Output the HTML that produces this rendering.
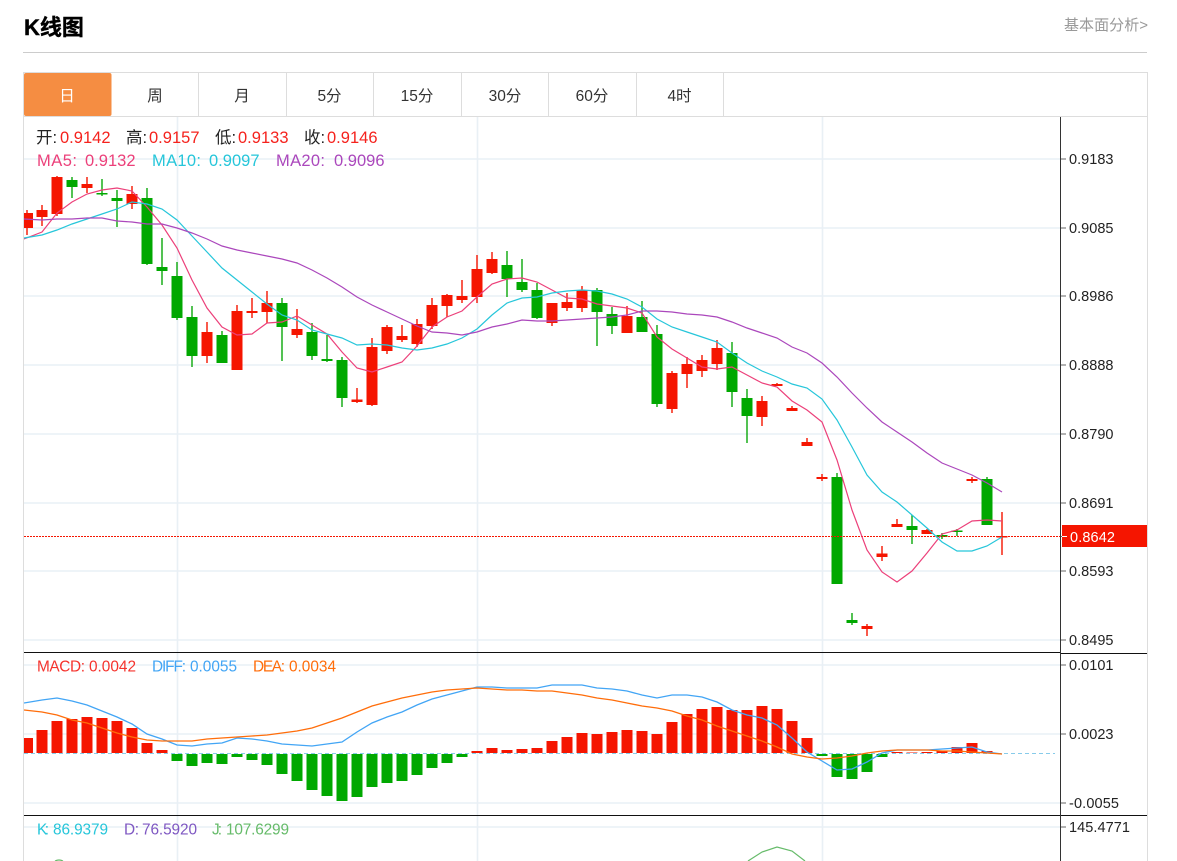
<!DOCTYPE html>
<html lang="zh"><head><meta charset="utf-8"><title>K线图</title>
<style>
html,body{margin:0;padding:0;background:#fff;width:1177px;height:861px;overflow:hidden}
svg{display:block}
text{font-family:"Liberation Sans","Noto Sans CJK SC",sans-serif}
.ax{font-size:14.5px;fill:#222}
.tab{font-size:15.5px;fill:#333;text-anchor:middle}
.l1{font-size:16.5px}.l2{font-size:15.4px}
</style></head><body>
<svg width="1177" height="861" viewBox="0 0 1177 861" xmlns="http://www.w3.org/2000/svg" fill="none">
<defs><clipPath id="c"><rect x="24" y="117" width="1037" height="744"/></clipPath></defs>
<text x="24" y="35" font-size="22" font-weight="bold" fill="#000" stroke="#000" stroke-width="0.4">K线图</text>
<text x="1064" y="30" font-size="15" fill="#999" textLength="84">基本面分析&gt;</text>
<path d="M23 52.5H1147" stroke="#ccc"/>
<path d="M23 72.5H1147.5V861M23.5 72V861M23 116.5H1147" stroke="#ddd"/>
<rect x="24" y="73" width="87.5" height="43" rx="2" fill="#f58d42"/>
<path d="M198.5 73V116M286.5 73V116M373.5 73V116M461.5 73V116M548.5 73V116M636.5 73V116M723.5 73V116" stroke="#ddd"/>
<text class="tab" x="67" y="101" style="fill:#fff">日</text>
<text class="tab" x="155" y="101">周</text>
<text class="tab" x="242" y="101">月</text>
<text class="tab" x="329.500" y="101">5分</text>
<text class="tab" x="417" y="101">15分</text>
<text class="tab" x="505" y="101">30分</text>
<text class="tab" x="592" y="101">60分</text>
<text class="tab" x="679.500" y="101">4时</text>

<!-- grid -->
<path d="M24 159H1061M24 228H1061M24 296H1061M24 365H1061M24 434H1061M24 503H1061M24 571H1061M24 640H1061M24 665H1061M24 734H1061M24 803H1061M24 827H1061M177.500 117V861M477.500 117V861M822.500 117V861" stroke="#e9f0f5" stroke-width="1.6"/>
<path d="M1061 159h5M1061 228h5M1061 296h5M1061 365h5M1061 434h5M1061 503h5M1061 571h5M1061 640h5M1061 536.500h5M1061 665h5M1061 734h5M1061 803h5M1061 827h5" stroke="#666"/>

<g clip-path="url(#c)">
<!-- red wicks -->
<path stroke="#f51500" stroke-width="1.4" d="M27 210V235M42 205V226M57 176V216M87 177V193M132 186V209M207 322V363M237 305V370M252 298V318M267 291V323M297 309V338M357 388V403M372 338V406M387 325V354M402 325V342M417 319V347M432 298V329M447 294V317M462 280V303M477 255V303M492 252V274M552 303V326M567 293V311M582 286V312M627 306V333M672 371V413M687 357V388M702 355V377M717 340V370M762 396V426M777 383V386M792 406V411M807 438V446M822 474V481M867 624V636M882 546V561M897 519V527M927 529V534M972 477V483M1002 512V555"/>
<!-- green wicks -->
<path stroke="#0aa80a" stroke-width="1.4" d="M72 177V198M102 179V196M117 190V227M147 188V265M162 238V285M177 262V320M192 306V367M222 331V363M282 298V361M312 323V360M327 335V362M342 357V407M507 251V297M522 259V292M537 283V319M597 288V346M612 307V334M642 301V332M657 325V407M732 342V407M747 389V443M837 473V584M852 613V625M912 515V544M942 533V539M957 529V536M987 477V525"/>
<!-- red bodies -->
<path stroke="#f51500" stroke-width="11" d="M27.500 213V228M42 210V217M57 177V214M87 184V188M132 194V204M207 332V356M237 311V370M252 311V313M267 303V312M297 329V335M357 399.500V402M372 347V405M387 327V351M402 336V340M417 324V344M432 305V326M447 295V306M462 296V300M477 269V297M492 259V273M552 303V323M567 302V308M582 290V308M627 316V333M672 373V409M687 364V374M702 360V371M717 348V364M762 401V417M777 384V386M792 408V411M807 442V446M822 477V479M867 626V629M882 553.500V557M897 524V527M927 530V534M972 479V481M1002 536V537.500"/>
<!-- green bodies -->
<path stroke="#00a800" stroke-width="11" d="M72 180V187M102 193V194.500M117 198V201M147 198V264M162 267V271M177 276V318M192 317V356M222 335V363M282 303V327M312 332V356M327 359V361M342 360V398M507 265V279M522 282V290M537 290V318M597 290V312M612 314V326M642 317V332M657 334V404M732 353V392M747 398V416M837 477V584M852 620V623M912 526V530M942 535V537M957 530.500V532M987 479V525"/>

<path d="M24 536.500H1061" stroke="#f51500" stroke-width="1" stroke-dasharray="2 1"/>

<polyline stroke="#ec407a" stroke-width="1.2" points="24,239 42,232 57,213 72,202 87,194 102,190 117,188 132,191 147,207 162,225 177,248 192,280 207,308 222,327 237,335 252,334 267,323 282,322 297,316 312,325 327,334 342,352 357,368 372,372 387,367 402,362 417,346 432,327 447,317 462,311 477,297 492,284 507,279 522,278 537,282 552,290 567,298 582,299 597,304 612,306 627,308 642,313 657,337 672,349 687,358 702,367 717,369 732,367 747,375 762,383 777,387 792,401 807,410 822,422 837,460 852,510 867,550 882,572 897,582 912,571 927,553 942,534 957,530 972,521 987,520 1002,521"/>
<polyline stroke="#26c6da" stroke-width="1.2" points="24,238 42,235 57,230 72,224 87,219 102,214 117,209 132,202 147,204 162,209 177,220 192,236 207,252 222,268 237,280 252,292 267,304 282,315 297,320 312,330 327,334 342,338 357,345 372,344 387,345 402,348 417,350 432,348 447,344 462,338 477,329 492,315 507,303 522,298 537,297 552,293 567,291 582,290 597,291 612,294 627,299 642,307 657,319 672,327 687,332 702,337 717,342 732,353 747,363 762,371 777,377 792,384 807,388 822,399 837,420 852,447 867,475 882,492 897,502 912,515 927,528 942,542 957,551 972,551 987,546 1002,537"/>
<polyline stroke="#ab47bc" stroke-width="1.2" points="24,219 42,220 57,219 72,219 87,218 102,218 117,221 132,222 147,224 162,224 177,228 192,233 207,239 222,246 237,250 252,253 267,256 282,259 297,263 312,270 327,278 342,287 357,297 372,305 387,312 402,319 417,326 432,332 447,333 462,335 477,332 492,327 507,324 522,320 537,321 552,321 567,320 582,319 597,318 612,317 627,315 642,311 657,311 672,312 687,314 702,315 717,317 732,322 747,328 762,333 777,338 792,347 807,353 822,363 837,377 852,393 867,408 882,422 897,432 912,442 927,453 942,463 957,469 972,475 987,483 1002,492"/>

<!-- MACD -->
<path d="M24 753.500H1055" stroke="#87cbea" stroke-dasharray="4 3"/>
<path stroke="#f51500" stroke-width="11" d="M27.500 753V738M42 753V730M57 753V721M72 753V719M87 753V717M102 753V718M117 753V721M132 753V728M147 753V743M162 753V750M477 753V751M492 753V748M507 753V750M522 753V749M537 753V748M552 753V741M567 753V737M582 753V733M597 753V734M612 753V732M627 753V730M642 753V731M657 753V734M672 753V722M687 753V714M702 753V709M717 753V707M732 753V710M747 753V710M762 753V706M777 753V709M792 753V721M807 753V738M897 753V752M912 753V752.500M927 753V752M942 753V751M957 753V747M972 753V743M987 753V751"/>
<path stroke="#00a800" stroke-width="11" d="M177 754V761M192 754V766M207 754V763M222 754V764M237 754V757M252 754V760M267 754V765M282 754V774M297 754V781M312 754V790M327 754V796M342 754V801M357 754V797M372 754V787M387 754V783M402 754V781M417 754V775M432 754V768M447 754V763M462 754V757M822 754V756M837 754V777M852 754V779M867 754V772M882 754V757"/>
<polyline stroke="#42a5f5" stroke-width="1.3" points="24,703 42,700 57,698 72,701 87,705 102,711 117,717 132,724 147,734 162,739 177,745 192,746 207,744 222,743 237,738 252,739 267,741 282,744 297,745 312,746 327,744 342,742 357,732 372,723 387,717 402,712 417,705 432,699 447,695 462,691 477,687 492,687 507,688 522,688 537,688 552,685 567,685 582,685 597,688 612,689 627,691 642,695 657,698 672,695 687,695 702,697 717,702 732,710 747,715 762,718 777,725 792,738 807,752 822,761 837,770 852,769 867,762 882,753 897,750 912,750 927,750 942,749 957,748 972,747 987,752 1002,754"/>
<polyline stroke="#ff6d0a" stroke-width="1.3" points="24,710 42,712 57,715 72,720 87,723 102,728 117,733 132,737 147,740 162,741 177,741 192,741 207,739 222,738 237,737 252,736 267,735 282,733 297,731 312,728 327,723 342,718 357,712 372,706 387,702 402,698 417,695 432,692 447,690 462,689 477,688 492,689 507,690 522,690 537,691 552,691 567,693 582,695 597,698 612,700 627,703 642,706 657,708 672,711 687,716 702,720 717,726 732,731 747,736 762,741 777,747 792,754 807,757 822,759 837,758 852,756 867,753 882,751 897,750 912,750 927,750 942,751 957,751 972,752 987,753 1002,754"/>
<!-- J -->
<polyline stroke="#66bb6a" stroke-width="1.2" points="748,861 762,852 777,847 792,851 805,861"/>
<path d="M55 861Q59 859 63 861" stroke="#66bb6a" stroke-width="1.2"/>
</g>

<path d="M24 652.500H1061M1061 653.500H1147M24 815.500H1147" stroke="#111"/>
<path d="M1060.500 117V861" stroke="#333"/>

<rect x="1062" y="525" width="85" height="22" fill="#f51500"/>
<path d="M1062 536.500h5" stroke="#fff"/>
<text x="1070" y="542" font-size="14.5" fill="#fff" textLength="45">0.8642</text>

<g class="ax">
<text class="ax" x="1069" y="164" textLength="44.500">0.9183</text>
<text class="ax" x="1069" y="233" textLength="44.500">0.9085</text>
<text class="ax" x="1069" y="301" textLength="44.500">0.8986</text>
<text class="ax" x="1069" y="370" textLength="44.500">0.8888</text>
<text class="ax" x="1069" y="439" textLength="44.500">0.8790</text>
<text class="ax" x="1069" y="508" textLength="44.500">0.8691</text>
<text class="ax" x="1069" y="576" textLength="44.500">0.8593</text>
<text class="ax" x="1069" y="645" textLength="44.500">0.8495</text>
<text class="ax" x="1069" y="670" textLength="44.500">0.0101</text>
<text class="ax" x="1069" y="739" textLength="44.500">0.0023</text>
<text class="ax" x="1069" y="808" textLength="50">-0.0055</text>
<text class="ax" x="1069" y="832" textLength="61">145.4771</text>
</g>

<!-- legends -->
<g class="l1" fill="#222">
<text class="l1" x="36" y="143" fill="#222">开:</text>
<text class="l1" x="60" y="143" fill="#f5221d" textLength="50.500">0.9142</text>
<text class="l1" x="126" y="143" fill="#222">高:</text>
<text class="l1" x="149" y="143" fill="#f5221d" textLength="50.500">0.9157</text>
<text class="l1" x="215" y="143" fill="#222">低:</text>
<text class="l1" x="238" y="143" fill="#f5221d" textLength="50.500">0.9133</text>
<text class="l1" x="304" y="143" fill="#222">收:</text>
<text class="l1" x="327" y="143" fill="#f5221d" textLength="50.500">0.9146</text>
</g>
<text class="l1" x="37" y="166" fill="#ec407a" textLength="40">MA5:</text>
<text class="l1" x="85" y="166" fill="#ec407a" textLength="50.500">0.9132</text>
<text class="l1" x="152" y="166" fill="#26c6da" textLength="49">MA10:</text>
<text class="l1" x="209" y="166" fill="#26c6da" textLength="50.500">0.9097</text>
<text class="l1" x="276" y="166" fill="#ab47bc" textLength="49">MA20:</text>
<text class="l1" x="334" y="166" fill="#ab47bc" textLength="50.500">0.9096</text>

<text class="l2" x="37" y="671.500" fill="#f5332d" textLength="48">MACD:</text>
<text class="l2" x="89" y="671.500" fill="#f5332d" textLength="47">0.0042</text>
<text class="l2" x="152" y="671.500" fill="#42a5f5" textLength="34">DIFF:</text>
<text class="l2" x="190" y="671.500" fill="#42a5f5" textLength="47">0.0055</text>
<text class="l2" x="253" y="671.500" fill="#ff6d0a" textLength="32">DEA:</text>
<text class="l2" x="289" y="671.500" fill="#ff6d0a" textLength="47">0.0034</text>
<text class="l2" x="37" y="834.500" fill="#26c6da" textLength="12">K:</text>
<text class="l2" x="53" y="834.500" fill="#26c6da" textLength="55">86.9379</text>
<text class="l2" x="124" y="834.500" fill="#7e57c2" textLength="15">D:</text>
<text class="l2" x="142" y="834.500" fill="#7e57c2" textLength="55">76.5920</text>
<text class="l2" x="212" y="834.500" fill="#66bb6a" textLength="10">J:</text>
<text class="l2" x="226" y="834.500" fill="#66bb6a" textLength="63">107.6299</text>
</svg>
</body></html>
